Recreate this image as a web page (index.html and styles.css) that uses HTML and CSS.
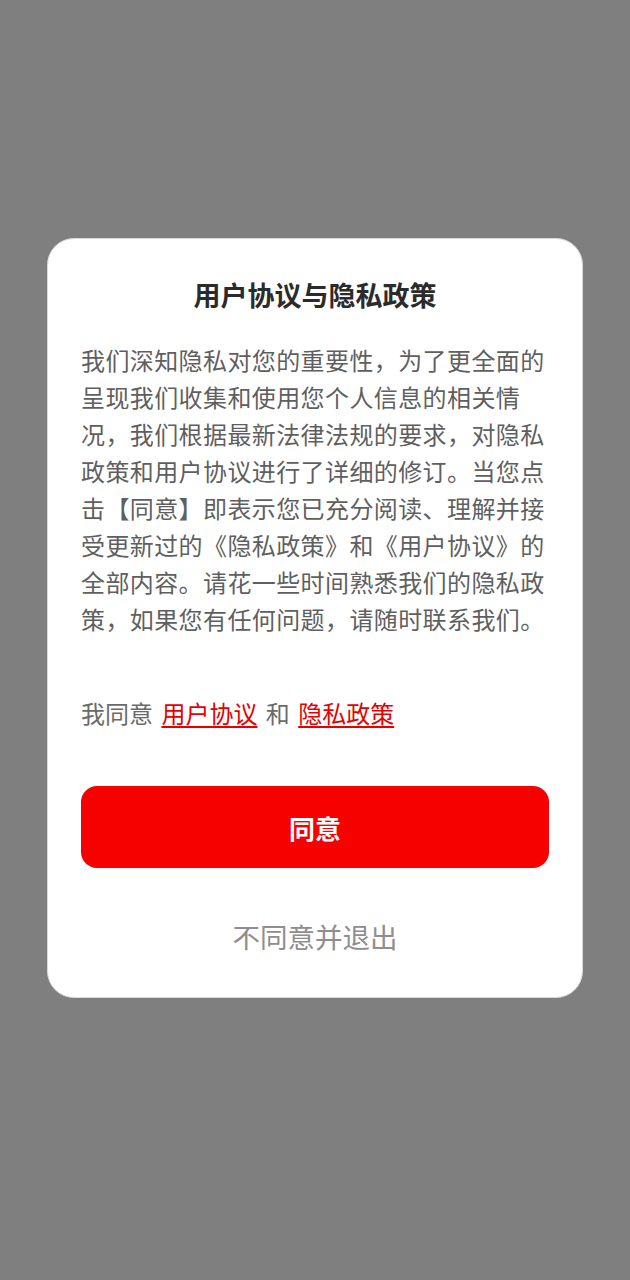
FILE: index.html
```html
<!DOCTYPE html>
<html lang="zh-CN">
<head>
<meta charset="utf-8">
<title>用户协议与隐私政策</title>
<link rel="stylesheet" href="styles.css">
</head>
<body>
<div class="overlay">
  <div class="dialog">
    <h1 class="title">用户协议与隐私政策</h1>
    <p class="content">我们深知隐私对您的重要性，为了更全面的呈现我们收集和使用您个人信息的相关情况，我们根据最新法律法规的要求，对隐私政策和用户协议进行了详细的修订。当您点击【同意】即表示您已充分阅读、理解并接受更新过的《隐私政策》和《用户协议》的全部内容。请花一些时间熟悉我们的隐私政策，如果您有任何问题，请随时联系我们。</p>
    <p class="agree">我同意 <a class="link" href="#">用户协议</a> 和 <a class="link" href="#">隐私政策</a></p>
    <button class="btn-agree" type="button">同意</button>
    <div class="btn-refuse">不同意并退出</div>
  </div>
</div>
</body>
</html>
```

FILE: styles.css
```css
* { box-sizing: border-box; }
html, body {
  margin: 0;
  padding: 0;
  background: #7f7f7f;
  font-family: "Noto Sans CJK SC", "Noto Sans", sans-serif;
}
.overlay {
  width: 630px;
  height: 1280px;
  padding-top: 238px;
  display: flex;
  justify-content: center;
  align-items: flex-start;
}
.dialog {
  width: 536px;
  height: 760px;
  background: #ffffff;
  border: 1.5px solid #d9d9d9;
  border-radius: 27px;
  padding: 37px 33px 0 33px;
  display: flex;
  flex-direction: column;
}
.title {
  margin: 0;
  font-size: 27px;
  line-height: 38px;
  font-weight: 700;
  color: #2b2b2b;
  text-align: center;
}
.content {
  margin: 27px 0 0 0;
  font-size: 24px;
  line-height: 37px;
  letter-spacing: 0.4px;
  color: #5f5f5f;
}
.agree {
  margin: 57px 0 0 0;
  font-size: 24px;
  line-height: 37px;
  color: #6a6a6a;
  word-spacing: 3px;
}
.link {
  color: #e60000;
  text-decoration: underline;
  text-underline-offset: 3px;
}
.btn-agree {
  margin-top: 55px;
  height: 82px;
  width: 100%;
  border: none;
  border-radius: 16px;
  background: #f70000;
  color: #ffffff;
  font-family: inherit;
  font-size: 26px;
  font-weight: 700;
}
.btn-refuse {
  margin-top: 47px;
  font-size: 27.5px;
  line-height: 42px;
  text-align: center;
  color: #8e8e8e;
}
```
